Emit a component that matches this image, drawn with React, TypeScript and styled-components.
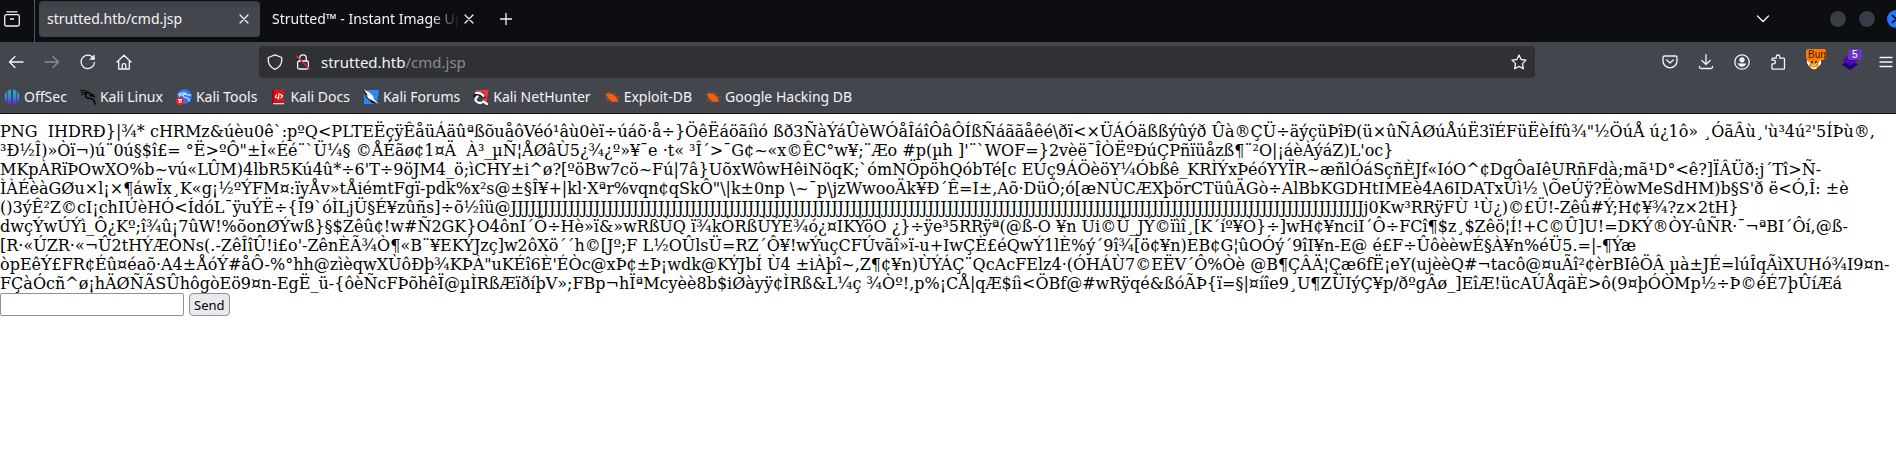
import React from 'react';
import styled, { createGlobalStyle } from 'styled-components';

const ui = '"Noto Sans", "Open Sans", sans-serif';

const GlobalStyle = createGlobalStyle`
  * { box-sizing: border-box; }
  body { margin: 0; background: #fff; overflow-x: hidden; }
`;

const Chrome = styled.header`
  overflow: hidden;
  background: #44464d;
  border-bottom: 1px solid #0c0d11;
  color: #f4f4f6;
  font: 14px/20px ${ui};
`;

const TitleBar = styled.div`
  display: flex;
  align-items: center;
  height: 42px;
  padding-bottom: 4px;
  background: #0d0e12;
`;

const IconButton = styled.button<{ $dim?: boolean }>`
  position: relative;
  display: flex;
  flex: none;
  align-items: center;
  justify-content: center;
  width: 32px;
  height: 32px;
  padding: 0;
  border: 0;
  background: none;
  color: ${(p) => (p.$dim ? '#8b8c91' : '#f4f4f6')};
`;

const ViewButton = styled(IconButton)`
  width: 24px;
`;

const Divider = styled.span`
  align-self: stretch;
  width: 1px;
  margin: 0 4px -4px 10px;
  background: #55565b;
`;

const Tabs = styled.div`
  display: flex;
  gap: 4px;
`;

const Tab = styled.div<{ $active?: boolean }>`
  display: flex;
  flex: none;
  align-items: center;
  width: 221px;
  height: 36px;
  padding: 0 6px 0 8px;
  border-radius: 4px;
  background: ${(p) => (p.$active ? 'linear-gradient(#3c3e44, #44464d 8px)' : 'none')};
`;

const TabTitle = styled.span<{ $fade?: boolean }>`
  flex: 1;
  overflow: hidden;
  white-space: nowrap;
  ${(p) => p.$fade && 'mask-image: linear-gradient(to left, transparent, #000 28px);'}
`;

const TabClose = styled(IconButton)`
  width: 20px;
  height: 20px;
`;

const NewTab = styled(IconButton)`
  margin-left: 5px;
`;

const Spring = styled.span`
  flex: 1;
`;

const WindowControls = styled.div`
  display: flex;
  gap: 13px;
  margin: 0 -8px 0 51px;
`;

const WindowButton = styled.button<{ $close?: boolean }>`
  display: flex;
  align-items: center;
  justify-content: center;
  width: 16px;
  height: 16px;
  padding: 0;
  border: 0;
  border-radius: 50%;
  background: ${(p) => (p.$close ? '#2777ff' : '#373c48')};
  box-shadow: 0 0 0 1px ${(p) => (p.$close ? '#2777ff' : '#08090b')};
  color: #0d0e12;
`;

const NavBar = styled.nav`
  display: flex;
  align-items: center;
  gap: 4px;
  height: 40px;
  margin-right: -6px;
`;

const UrlBar = styled.div`
  display: flex;
  flex: 1;
  align-items: center;
  height: 32px;
  margin: 0 115px;
  padding: 0 2px;
  border-radius: 4px;
  background: #303135;
`;

const UrlIcon = styled(IconButton)`
  width: 28px;
`;

const UrlText = styled.div`
  flex: 1;
  margin-left: 4px;
  font-size: 15px;
  white-space: nowrap;
`;

const UrlPath = styled.span`
  color: #8b8c90;
`;

const Badge = styled.span<{ $tone: string; $ink: string; $left: number }>`
  position: absolute;
  top: 3px;
  left: ${(p) => p.$left}px;
  width: ${(p) => (p.$left > 10 ? 14 : 20)}px;
  height: 11px;
  padding-left: ${(p) => (p.$left > 10 ? 4 : 2)}px;
  overflow: hidden;
  border-radius: 2px;
  background: ${(p) => p.$tone};
  color: ${(p) => p.$ink};
  font-size: 10px;
  line-height: 11px;
  text-align: left;
`;

const Bookmarks = styled.div`
  display: flex;
  align-items: center;
  gap: 13px;
  height: 31px;
  padding: 0 4px 2px;
`;

const Bookmark = styled.a`
  display: flex;
  align-items: center;
  gap: 4px;
  color: inherit;
  text-decoration: none;
  white-space: nowrap;
`;

const Page = styled.main`
  padding-top: 8px;
  color: #000;
  font: 16px/19px "DejaVu Serif", serif;
`;

const Output = styled.p`
  margin: 0;
`;

const OutputLine = styled.span`
  display: block;
  white-space: pre;
`;

const CommandForm = styled.form`
  display: flex;
  gap: 5px;
`;

const CommandInput = styled.input`
  width: 184px;
  height: 23px;
  padding: 1px 2px;
  border: 1px solid #8f8f9d;
  border-radius: 2px;
  background: #fff;
  font: 13px ${ui};
`;

const SendButton = styled.button`
  height: 23px;
  padding: 0 4px;
  border: 1px solid #8f8f9d;
  border-radius: 4px;
  background: #e9e9ed;
  color: #000;
  font: 13px/20px ${ui};
`;

type IconProps = { children: React.ReactNode; size?: number; width?: number };

const Line = ({ children, size = 16, width = 1.3 }: IconProps) => (
  <svg width={size} height={size} viewBox="0 0 16 16" fill="none" stroke="currentColor" strokeWidth={width} strokeLinecap="round" strokeLinejoin="round" aria-hidden="true">
    {children}
  </svg>
);

const Cross = () => <Line width={1.2}><path d="M4 4l8 8M12 4l-8 8" /></Line>;

const OffSecIcon = () => (
  <svg width="16" height="16" viewBox="0 0 16 16" aria-hidden="true">
    <defs>
      <linearGradient id="offsec" x1="0" y1="0" x2="0" y2="1">
        <stop offset="0" stopColor="#18b4c4" />
        <stop offset=".5" stopColor="#3585e0" />
        <stop offset="1" stopColor="#6a20e8" />
      </linearGradient>
    </defs>
    <path fill="url(#offsec)" d="M3 2.500v11C1.200 12 .6 10 .6 8S1.200 4 3 2.500zM3.800 2Q5.300.800 7 .500v15Q5.300 15 3.800 14zM9 .500Q10.700.800 12.200 2v12Q10.700 15 9 15.500zM13 2.500C14.800 4 15.400 6 15.400 8s-.6 4-2.400 5.500z" />
  </svg>
);

const KaliIcon = () => (
  <svg width="16" height="16" viewBox="0 0 16 16" fill="none" stroke="#050506" strokeLinecap="round" aria-hidden="true">
    <path strokeWidth="1" d="M.5 1.200Q5 .500 9 3.500M1 3.500Q4.500 2.500 8 3.500M1.500 5.800Q3.500 4.500 6 4.300" />
    <path strokeWidth="1.600" d="M6 3.300Q9 3 11 5.200Q13 5 14 7.300Q12 6.300 10 6.800M7 4Q4.500 5.500 6 8Q7.500 9.700 10.500 9.500Q14.500 10 15 15" />
  </svg>
);

const ToolsIcon = () => (
  <svg width="16" height="16" viewBox="0 0 16 16" aria-hidden="true">
    <circle cx="8.500" cy="7.500" r="7.300" fill="#2a7bf6" />
    <path fill="none" stroke="#dceaff" strokeWidth="1.100" strokeLinecap="round" d="M2.500 5.500Q6 2.800 10 4.200M3.500 7Q7 4.500 10.500 5.500Q13 6.500 14.500 6M7.500 5.500Q6.500 8 10 8.500Q13 9 13.500 12" />
    <circle cx="4" cy="12" r="4" fill="#e62432" />
    <path stroke="#fff" strokeWidth="1" d="M2 10.500h4M3.300 10.500V14M5 10.500V14" />
  </svg>
);

const DocsIcon = () => (
  <svg width="16" height="16" viewBox="0 0 16 16" aria-hidden="true">
    <path fill="#990c12" d="M2 1.500L4 .300V15.500H2z" />
    <path fill="#dc1219" d="M4 .300H14V13.500H4z" />
    <path fill="#e8c9ca" d="M3 14h11v1.300H3z" />
    <path fill="none" stroke="#fff" strokeWidth="1.200" strokeLinecap="round" strokeLinejoin="round" d="M6.500 6L5.300 8L7.500 9M9 4.500L8.500 10M10.500 5.500L12.500 6.800L11 9" />
  </svg>
);

const ForumsIcon = () => (
  <svg width="16" height="16" viewBox="0 0 16 16" aria-hidden="true">
    <path fill="#2f86f6" d="M4 1h12l-2 14H1V5z" />
    <path fill="#101317" d="M0 0l5 2 10 13-6-1-6-6z" />
    <path fill="#f5f8fb" d="M.5.300L6 3l4 4 1 3 5 5.500-6.500-4L6 10 3 6l2 .500z" />
  </svg>
);

const NetHunterIcon = () => (
  <svg width="16" height="16" viewBox="0 0 16 16" aria-hidden="true">
    <path fill="#f03540" d="M2 1h13.500l-2 13z" />
    <path fill="#18191c" d="M0 7l3-4 7 .500 3 5-3 1-4-3-4 4z" />
    <path fill="none" stroke="#fff" strokeWidth="2.200" strokeLinecap="round" d="M3 4Q8 3 10.500 7M4.500 7.500Q1 10 3.500 12.500Q7 15.500 10.500 12.500L14 15" />
  </svg>
);

const ExploitIcon = () => (
  <svg width="16" height="16" viewBox="0 0 16 16" aria-hidden="true">
    <path fill="none" stroke="#b0592d" strokeWidth=".8" d="M5 5L4.500 2.500M8 5V2.500M10 6l2-2.500M12 8h4M3 6L1 5M4 9H1M6 11l-4 1M9 12l-3 2M13 12l2 1" />
    <path fill="#f2600f" d="M2 5.500Q3 3.500 5.500 4.500Q9 4 11.500 7.500Q13.500 9.500 14 12Q10.500 14 7 12Q3.500 10 2 5.500z" />
  </svg>
);

const BurpIcon = () => (
  <svg width="16" height="16" viewBox="0 0 16 16" aria-hidden="true">
    <path fill="#e98a16" d="M1 3h14l-1 7q-2 5-6 5.500Q4 15 2 11z" />
    <path fill="#fff" d="M1 6l3 3-1 3-2-3zM15 5v5l-3 3 1-5zM5 11l3 3 3-2-1 3H6z" />
    <path fill="#5b3209" d="M5 7h2v2H5zM9 7h2v2H9z" />
    <path fill="none" stroke="#e7e1d6" strokeWidth="1" d="M6 10l2 2 3-3" />
  </svg>
);

const LayersIcon = () => (
  <svg width="16" height="16" viewBox="0 0 16 16" aria-hidden="true">
    <path fill="#1d0078" d="M0 10.500l3-2h10l3 2-8 5.500z" />
    <path fill="#4b08b4" d="M0 6l8-6 8 6-8 6z" />
  </svg>
);

const bookmarks = [
  { label: 'OffSec', icon: <OffSecIcon /> },
  { label: 'Kali Linux', icon: <KaliIcon /> },
  { label: 'Kali Tools', icon: <ToolsIcon /> },
  { label: 'Kali Docs', icon: <DocsIcon /> },
  { label: 'Kali Forums', icon: <ForumsIcon /> },
  { label: 'Kali NetHunter', icon: <NetHunterIcon /> },
  { label: 'Exploit-DB', icon: <ExploitIcon /> },
  { label: 'Google Hacking DB', icon: <ExploitIcon /> },
];

const output = [
  'PNG  IHDRÐ}|¾* cHRMz&úèu0ê`:pºQ<PLTEËçÿÊåüÁäûªßõuåôVéó¹âù0èï÷úáõ·å÷}ÖêËáöãíìó ßð3ÑàÝáÛèWÓåÎáîÔâÔÍßÑáããåêé\\ðï<×ÜÁÓäßßýûýð Ûà®ÇÜ÷äýçüÞîÐ(ü×ûÑÂØúÅúË3ïÉFüËèÍfû¾"½ÖúÅ ú¿1ô» ¸ÓãÂù¸\'ù³4ú²\'5ÍÞù®,',
  '³Ð½Î)»Òï¬)ú¨0ú§$î£= °Ë>ºÔ"±Ì«Éé¨`Ü¼§ ©ÅÉãø¢1¤Ä  À³_µÑ¦ÅØâÙ5¿¾¿º»¥¯e ·t« ³Î´>¯G¢~«x©ÊC°w¥;¨Æo #p(µh ]\'¨`WOF=}2vèë¯ÎÒËºÐúÇPñïüåzß¶¨²O|¡áèÀýáZ)L\'oc}',
  'MKpÀRïÞOwXO%b~vú«LÛM)4lbR5Kú4û*÷6\'T÷9öJM4_ö;ìCHY±i^ø?[ºöBw7cö~Fú|7â}UõxWôwHêiNöqK;`ómNÖpöhQóbTé[c EÚç9ÁÖèöY¼Óbßê_KRÌÝxÞéóYYÏR~æñlÓáSçñÈJf«IóO^¢DgÔaIêURñFdà;mã¹D°<ê?]ÏÂÜð:j´Tî>Ñ-',
  String.raw`ÌÀÉèàGØu×l¡×¶áwÏx¸K«g¡½ºÝFM¤:ïyÅv»tÅiémtFgï-pdk%x²s@±§Î¥+|kl·Xªr%vqn¢qSkÔ"\|k±0np \~¯p\jzWwooÄk¥Ð´Ê=I±,Aõ·DüÓ;ó[æNÙCÆXþörCTüûÄGò÷AlBbKGDHtIMEè4A6IDATxÚì½ \ÕeÚÿ?ËòwMeSdHM)b§S'ð ë<Ó,Î: ±è`,
  '()3ýÊ²Z©cI¡chIÚèHÓ<ÍdóL¯ÿuÝË÷{Ï9`óÌLjÜ§É¥zûñs]÷õ½îü@' + 'J'.repeat(133) + 'j0Kw³RRÿFÙ ¹Ù¿)©£Ü!-Zêû#Ý;H¢¥¾?z×2tH}',
  'dwçÝwÚÝì_Ô¿Kº;î¾û¡7ûW!%õonØÝwß}§$Zêû¢!w#Ñ2GK}O4ônI´Ô÷Hè»ï&»wRßÙQ ï¾kÒRßÙÝÉ¾ó¿¤IKÝöÒ ¿}÷ÿe³5RRÿª(@ß-O ¥n Ui©Û_JÝ©ïìî¸[K´íº¥Ò}÷]wH¢¥nciI´Ô÷FCî¶$z¸$Zêö¦Í!+C©Û]U!=DKÝ®ÒY-ûÑR·¯¬ªBI´Ôí,@ß-',
  '[R·«ÚZR·«¬Û2tHÝÆÒNs(.-ZêÎîÛ!i£o\'-ZênÈÃ¾Ò¶«B¨¥EKÝJzç]w2ôXö´´h©[Jº;F L½OÛlsÜ=RZ´Ô¥!wÝuçCFÚvãî»ï-u+IwÇÈ£éQwÝ1lÈ%ý´9î¾[ö¢¥n)EB¢G¦ûOÓý´9îI¥n-E@ é£F÷ÛôèèwÉ§À¥n%éÜ5.=|-¶Ýæ',
  'òpEêÝ£FR¢Éû¤éaõ·A4±ÅóÝ#åÔ-%°hh@zìèqwXÙôÐþ¾KÞÀ"uKÉî6È\'ÉÒc@xÞ¢±Þ¡wdk@KÝJbÍ Ù4 ±iÀþî~,Z¶¢¥n)ÙÝÁÇ¨QcAcFElz4·(ÓHÁÙ7©EËV´Ô%Òè @B¶ÇÂÄ¦Çæ6fË¡eY(ujèèQ#¬tacô@¤uÃî²¢èrBIêÖÂ µà±JÉ=lúÎqÃìXUHó¾I9¤n-',
  'FÇàÓcñ^ø¡hÄØÑÃSÛhôgòEö9¤n-EgË_ü-{ôèÑcFÞõhêÏ@µÌRßÆïðíþV»;FBp¬hÏªMcyèè8b$iØàyÿ¢ÌRß&L¼ç ¾Òº!,p%¡CÅ|qÆ$íì<ÖBf@#wRÿqé&ßóÃÞ{ï=§|¤íîe9¸U¶ZÜIýÇ¥p/ðºgÂø_]EîÆ!ücAÚÅqäÈ>ô(9¤þÓÒMp½÷Þ©éÉ7þÛíÆá',
];

export default function App() {
  return (
    <>
      <GlobalStyle />
      <Chrome>
        <TitleBar>
          <ViewButton aria-label="Firefox View">
            <Line><path d="M3 .8h10" /><rect x=".7" y="3.700" width="14.600" height="11.300" rx="1.800" /><path d="M6.500 8h3" /></Line>
          </ViewButton>
          <Divider />
          <Tabs>
            <Tab $active>
              <TabTitle>strutted.htb/cmd.jsp</TabTitle>
              <TabClose aria-label="Close tab"><Cross /></TabClose>
            </Tab>
            <Tab>
              <TabTitle $fade>Strutted™ - Instant Image Up</TabTitle>
              <TabClose aria-label="Close tab"><Cross /></TabClose>
            </Tab>
          </Tabs>
          <NewTab aria-label="New tab"><Line><path d="M8 2.500v11M2.500 8h11" /></Line></NewTab>
          <Spring />
          <IconButton aria-label="List all tabs"><Line><path d="M2.500 5L8 10.500L13.500 5" /></Line></IconButton>
          <WindowControls>
            <WindowButton aria-label="Minimize" />
            <WindowButton aria-label="Maximize" />
            <WindowButton $close aria-label="Close"><Line size={14} width={2}><path d="M4 4l8 8M12 4l-8 8" /></Line></WindowButton>
          </WindowControls>
        </TitleBar>
        <NavBar>
          <IconButton aria-label="Back"><Line><path d="M15 8H1.500M7 2.500L1.500 8L7 13.500" /></Line></IconButton>
          <IconButton $dim aria-label="Forward"><Line><path d="M1 8h13.500M9 2.500L14.500 8L9 13.500" /></Line></IconButton>
          <IconButton aria-label="Reload"><Line><path d="M14.500 8.500A6.700 6.700 0 1 1 11.500 2.200L14 4.500" /><path d="M14.300 1.200v4.300H10z" fill="currentColor" strokeWidth=".6" /></Line></IconButton>
          <IconButton aria-label="Home"><Line><path d="M1 8l7-6.800L15 8M2.700 7v8h10.600V7M6.200 15v-3.500a1.800 1.800 0 0 1 3.600 0V15" /></Line></IconButton>
          <UrlBar>
            <UrlIcon aria-label="Tracking protection"><Line><path d="M8 .8L14.700 3.500V6.500C14.700 10.500 12 13.500 8 15.300C4 13.500 1.300 10.500 1.300 6.500V3.500z" /></Line></UrlIcon>
            <UrlIcon aria-label="Connection not secure">
              <Line><rect x="2.600" y="7" width="10.800" height="8" rx="1.500" /><path d="M4.700 7V4.200a3.300 3.300 0 0 1 6.600 0V7" /><path d="M1.500 2l13 13" stroke="#e22850" /></Line>
            </UrlIcon>
            <UrlText>strutted.htb<UrlPath>/cmd.jsp</UrlPath></UrlText>
            <UrlIcon aria-label="Bookmark this page"><Line><path d="M8 1L10.100 5.500L15 6.100L11.500 9.600L12.400 14.800L8 12.400L3.600 14.800L4.500 9.600L1 6.100L5.900 5.500z" /></Line></UrlIcon>
          </UrlBar>
          <IconButton aria-label="Save to Pocket"><Line><path d="M2.500 2h11a1.500 1.500 0 0 1 1.500 1.500V7A7 6.800 0 0 1 1 7V3.500A1.500 1.500 0 0 1 2.500 2zM4.700 6L8 9L11.300 6" /></Line></IconButton>
          <IconButton aria-label="Downloads"><Line><path d="M8 .700V10.500M3.800 6.500L8 10.500L12.200 6.500M1.500 12.500V13a1.500 1.500 0 0 0 1.500 1.500H13a1.500 1.500 0 0 0 1.500-1.500V12.500" /></Line></IconButton>
          <IconButton aria-label="Account"><Line><circle cx="8" cy="8" r="7.200" /><circle cx="8" cy="5.800" r="2" fill="currentColor" /><path d="M4.200 9.800h7.600Q11 12.500 8 12.500T4.200 9.800z" fill="currentColor" strokeWidth=".6" /></Line></IconButton>
          <IconButton aria-label="Extensions"><Line><path d="M2 9.800H3.600a1.700 1.700 0 0 0 0-3.600H2V5a.8.8 0 0 1 .8-.8H6.200V2.800a1.800 1.800 0 0 1 3.600 0V4.200H13.700a.8.8 0 0 1 .8.800V14.400a.8.8 0 0 1-.8.800H2.800a.8.8 0 0 1-.8-.8z" /></Line></IconButton>
          <IconButton aria-label="Burp profile"><BurpIcon /><Badge $tone="#ff7a00" $ink="#3a1c00" $left={8}>Burp</Badge></IconButton>
          <IconButton aria-label="Technology profiler"><LayersIcon /><Badge $tone="#6a35c0" $ink="#fff" $left={14}>5</Badge></IconButton>
          <IconButton aria-label="Open menu"><Line><path d="M2 3.500h12M2 8h12M2 12.500h12" /></Line></IconButton>
        </NavBar>
        <Bookmarks>
          {bookmarks.map((b) => (
            <Bookmark key={b.label} href="#">{b.icon}{b.label}</Bookmark>
          ))}
        </Bookmarks>
      </Chrome>
      <Page>
        <Output>
          {output.map((line, i) => <OutputLine key={i}>{line}</OutputLine>)}
        </Output>
        <CommandForm onSubmit={(e) => e.preventDefault()}>
          <CommandInput name="cmd" aria-label="Command" />
          <SendButton>Send</SendButton>
        </CommandForm>
      </Page>
    </>
  );
}
